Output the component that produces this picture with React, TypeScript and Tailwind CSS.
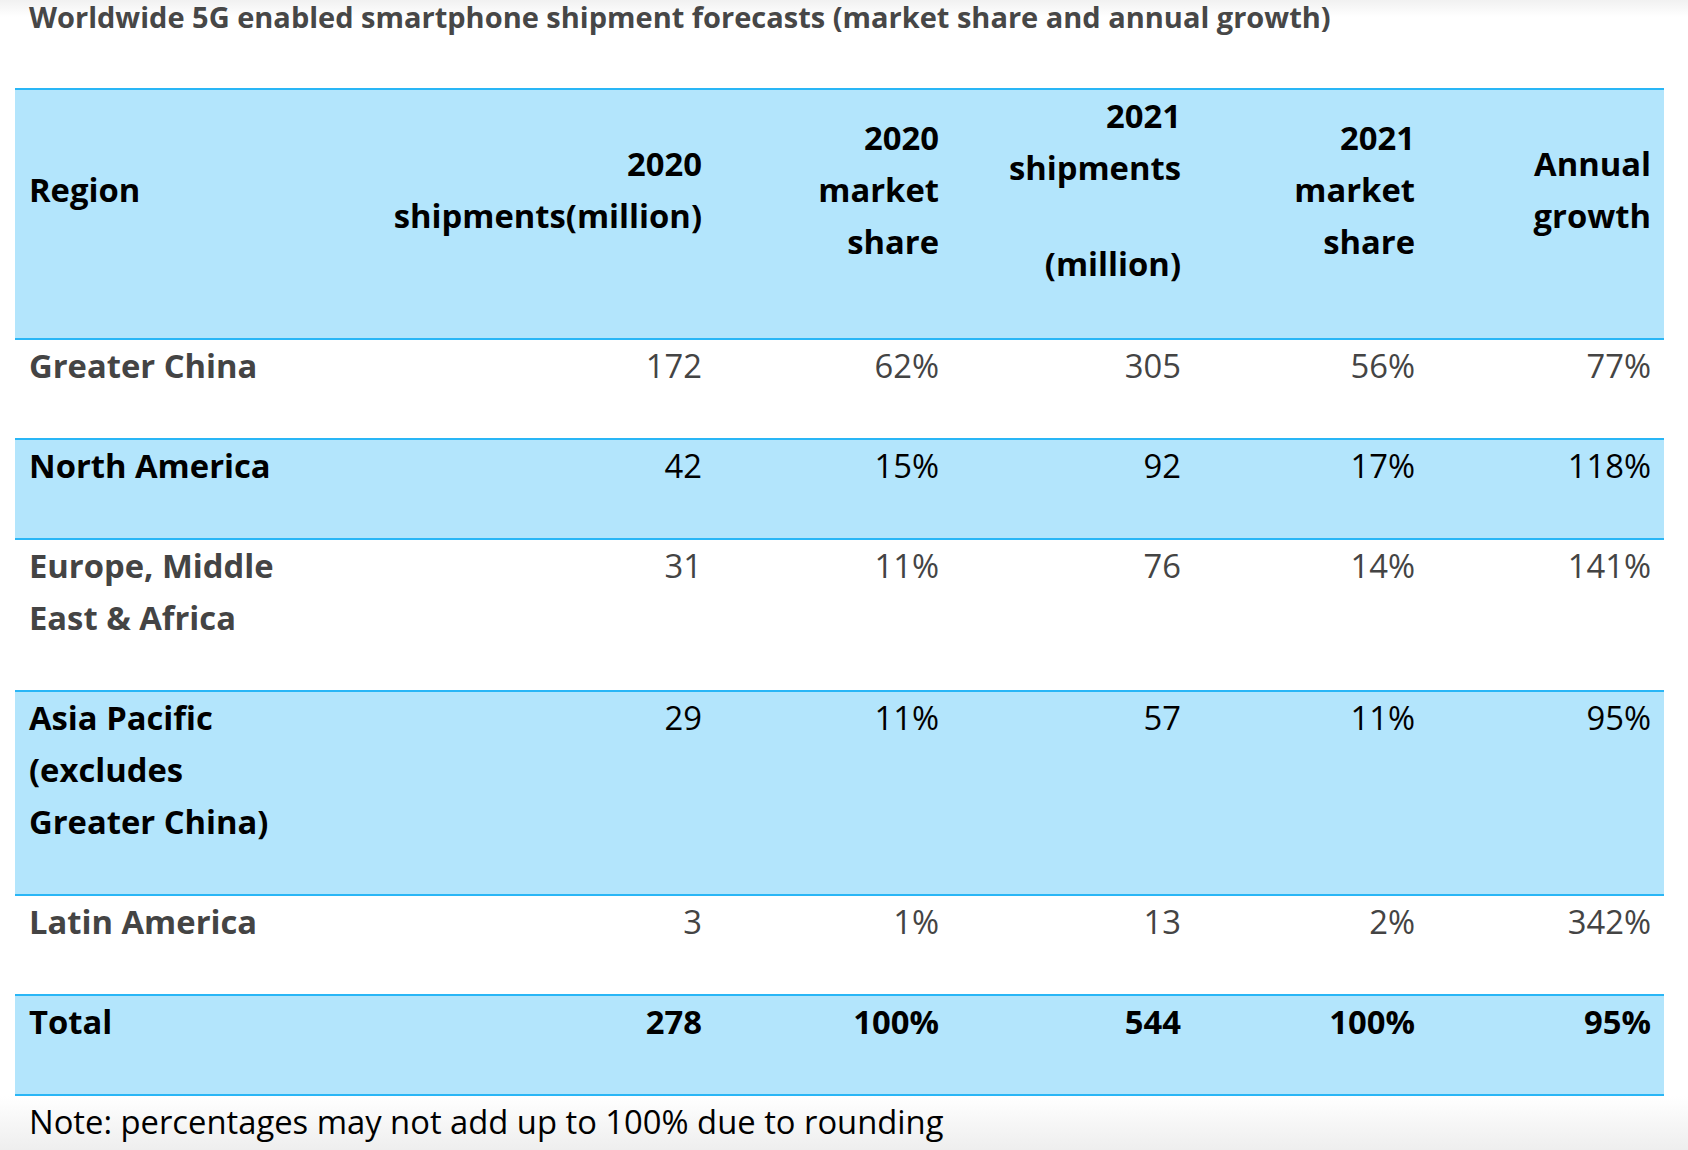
type Row = {
  region: string[]
  values: string[]
  blue: boolean
  total?: boolean
}

const rows: Row[] = [
  { region: ["Greater China"], values: ["172", "62%", "305", "56%", "77%"], blue: false },
  { region: ["North America"], values: ["42", "15%", "92", "17%", "118%"], blue: true },
  { region: ["Europe, Middle", "East & Africa"], values: ["31", "11%", "76", "14%", "141%"], blue: false },
  {
    region: ["Asia Pacific", "(excludes", "Greater China)"],
    values: ["29", "11%", "57", "11%", "95%"],
    blue: true,
  },
  { region: ["Latin America"], values: ["3", "1%", "13", "2%", "342%"], blue: false },
  { region: ["Total"], values: ["278", "100%", "544", "100%", "95%"], blue: true, total: true },
]

function Lines({ lines }: { lines: string[] }) {
  return (
    <>
      {lines.map((l) => (
        <div key={l}>{l}</div>
      ))}
    </>
  )
}

export default function App() {
  return (
    <div className="flex h-[1150px] w-[1688px] flex-col overflow-hidden bg-white font-['Open_Sans',sans-serif]">
      <div className="bg-gradient-to-b from-[#f1f1f1] via-white to-white pl-[29px] text-[29px] font-bold leading-[34px] text-[#474747]">
        Worldwide 5G enabled smartphone shipment forecasts (market share and annual growth)
      </div>

      <table className="ml-[15px] mt-[54px] w-[1649px] table-fixed border-collapse text-[32.75px] leading-[52px]">
        <colgroup>
          <col className="w-[300px]" />
          <col className="w-[400px]" />
          <col className="w-[237px]" />
          <col className="w-[242px]" />
          <col className="w-[234px]" />
          <col className="w-[236px]" />
        </colgroup>
        <thead>
          <tr className="border-t-2 border-[#29b6f6] bg-[#b3e5fc] font-bold text-black">
            <th className="pb-[48px] pl-[14px] pr-[13px] pt-0 text-left align-middle">Region</th>
            <th className="pb-[48px] pl-[14px] pr-[13px] pt-0 text-right align-middle">
              <Lines lines={["2020", "shipments(million)"]} />
            </th>
            <th className="pb-[48px] pl-[14px] pr-[13px] pt-0 text-right align-middle">
              <Lines lines={["2020", "market", "share"]} />
            </th>
            <th className="pb-[48px] pl-[14px] pr-[13px] pt-0 text-right align-middle">
              <div>2021</div>
              <div>shipments</div>
              <div className="h-[44px]" />
              <div>(million)</div>
            </th>
            <th className="pb-[48px] pl-[14px] pr-[13px] pt-0 text-right align-middle">
              <Lines lines={["2021", "market", "share"]} />
            </th>
            <th className="pb-[48px] pl-[14px] pr-[13px] pt-0 text-right align-middle">
              <Lines lines={["Annual", "growth"]} />
            </th>
          </tr>
        </thead>
        <tbody>
          {rows.map((r, i) => (
            <tr
              key={r.region[0]}
              className={`border-t-2 border-[#29b6f6] ${r.blue ? "bg-[#b3e5fc] text-black" : "text-[#444444]"} ${
                i === rows.length - 1 ? "border-b-2" : ""
              }`}
            >
              <td className="pb-[46px] pl-[14px] pr-[13px] pt-0 align-top font-bold">
                <Lines lines={r.region} />
              </td>
              {r.values.map((v, j) => (
                <td
                  key={j}
                  className={`pb-[46px] pl-[14px] pr-[13px] pt-0 text-right align-top ${
                    r.total ? "font-bold" : "font-normal"
                  }`}
                >
                  {v}
                </td>
              ))}
            </tr>
          ))}
        </tbody>
      </table>

      <div className="flex-1 bg-gradient-to-b from-white to-[#eeeeee] pl-[29px] text-[32.75px] leading-[52px] text-black">
        Note: percentages may not add up to 100% due to rounding
      </div>
    </div>
  )
}
